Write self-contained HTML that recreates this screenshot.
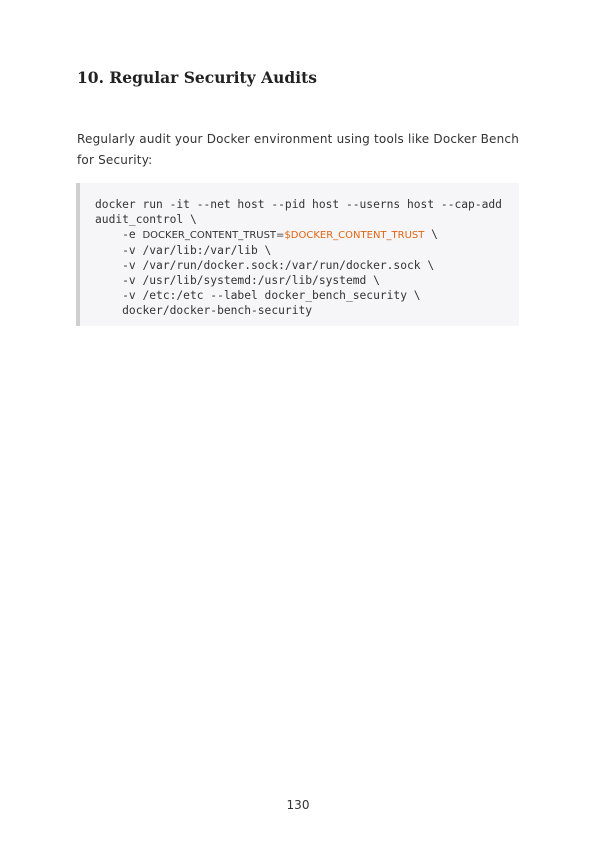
<!DOCTYPE html>
<html><head><meta charset="utf-8"><style>
body{margin:0;width:596px;height:842px;background:#fff;position:relative;color:#222}
h1{position:absolute;left:77px;top:68px;margin:0;font:bold 15.5px "DejaVu Serif","Liberation Serif",serif;color:#222}
p{position:absolute;left:77px;top:129px;margin:0;width:445px;font:12px/21px "DejaVu Sans","Liberation Sans",sans-serif;letter-spacing:0.2px;color:#333}
.code{position:absolute;left:76px;top:183px;width:439px;height:143px;background:#f6f6f8;border-left:4px solid #cfcfcf}
pre{margin:0;position:absolute;left:15px;top:14px;font:11.28px/15px "DejaVu Sans Mono","Liberation Mono",monospace;color:#333}
.s{font-family:"DejaVu Sans",sans-serif;font-size:10px}
.o{color:#e0640f;font-family:"DejaVu Sans",sans-serif;font-size:10px}
.pg{position:absolute;left:0;width:596px;top:798px;text-align:center;font:12px "DejaVu Sans",sans-serif;color:#333}
</style></head><body>
<h1>10. Regular Security Audits</h1>
<p>Regularly audit your Docker environment using tools like Docker Bench for Security:</p>
<div class="code"><pre>docker run -it --net host --pid host --userns host --cap-add
audit_control \
    -e <span class="s">DOCKER_CONTENT_TRUST=</span><span class="o">$DOCKER_CONTENT_TRUST</span> \
    -v /var/lib:/var/lib \
    -v /var/run/docker.sock:/var/run/docker.sock \
    -v /usr/lib/systemd:/usr/lib/systemd \
    -v /etc:/etc --label docker_bench_security \
    docker/docker-bench-security</pre></div>
<div class="pg">130</div>
</body></html>
